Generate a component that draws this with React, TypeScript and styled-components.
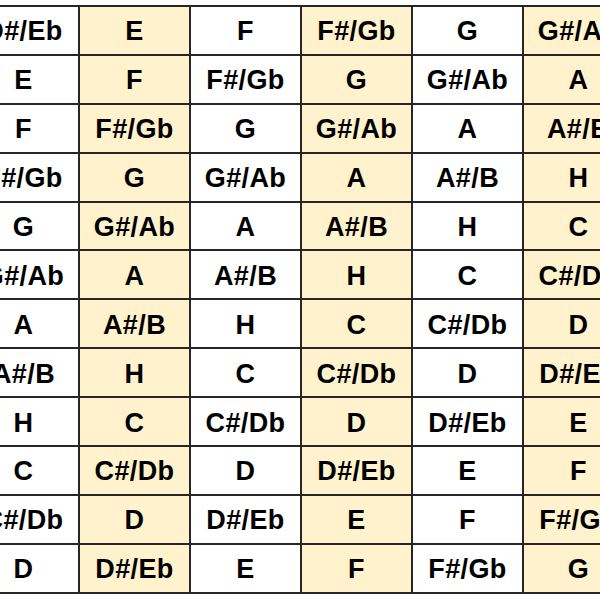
import styled, { createGlobalStyle } from "styled-components";

const NOTES = ["C", "C#/Db", "D", "D#/Eb", "E", "F", "F#/Gb", "G", "G#/Ab", "A", "A#/B", "H"];
const ROWS = 12;
const COLS = 6;
const START = 3; // first visible cell is D#/Eb

const GlobalStyle = createGlobalStyle`
    html, body {
        margin: 0;
        padding: 0;
        background: #ffffff;
        overflow: hidden;
    }
    body {
        font-family: "Liberation Sans", Arial, sans-serif;
    }
`

const Page = styled.div`
    width: 600px;
    height: 600px;
    overflow: hidden;
    padding-top: 5px;
    box-sizing: border-box;
`

const Table = styled.div`
    margin-left: -33px;
    display: grid;
    grid-template-columns: repeat(${COLS}, 111px);
    grid-auto-rows: 48.9px;
    border-top: 2px solid #262626;
    border-left: 2px solid #262626;
    width: max-content;
`

const Cell = styled.div<{ $shaded: boolean }>`
    box-sizing: border-box;
    display: flex;
    align-items: center;
    justify-content: center;
    padding-top: 3px;
    border-right: 2px solid #262626;
    border-bottom: 2px solid #262626;
    background: ${(p) => (p.$shaded ? "#fff2cc" : "#ffffff")};
    font-size: 27px;
    font-weight: bold;
    color: #000000;
    white-space: nowrap;
    letter-spacing: 0.4px;
`

const App = () => {
    return (
        <Page>
            <GlobalStyle />
            <Table>
                {Array.from({ length: ROWS }).map((_, r) =>
                    Array.from({ length: COLS }).map((_, c) => (
                        <Cell key={`${r}-${c}`} $shaded={c % 2 === 1}>
                            {NOTES[(START + r + c) % 12]}
                        </Cell>
                    ))
                )}
            </Table>
        </Page>
    )
}

export default App;
